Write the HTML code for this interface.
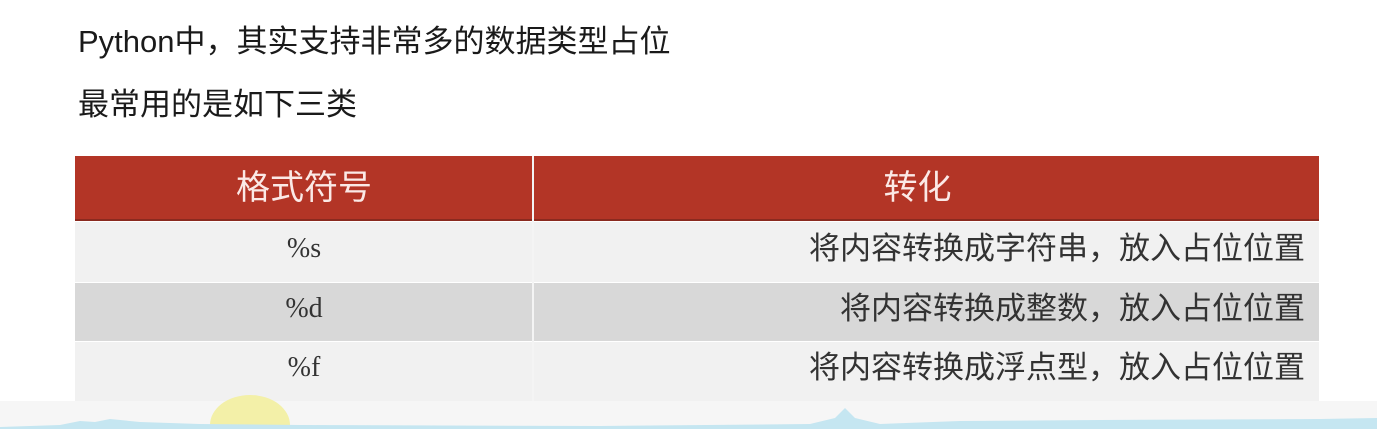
<!DOCTYPE html>
<html><head><meta charset="utf-8"><style>
html,body{margin:0;width:1377px;height:429px;overflow:hidden;}
body{background:#fff;position:relative;font-family:"Liberation Sans","Noto Sans CJK SC",sans-serif;}
.t{position:absolute;left:78px;font-size:31px;color:#1a1a1a;line-height:1;}
.c{position:absolute;font-family:"Liberation Sans","Noto Sans CJK SC",sans-serif;font-size:31px;color:#333;line-height:1;}
.m{font-family:"Liberation Serif",serif;font-size:28px;}
.r{position:absolute;left:75px;width:1244px;}
</style></head><body>
<div class="t" style="top:26px">Python中，其实支持非常多的数据类型占位</div>
<div class="t" style="top:89px">最常用的是如下三类</div>
<div class="r" style="top:156px;height:63px;background:#b33526;border-bottom:2px solid #8a2a1f"></div>
<div class="r" style="top:222px;height:60px;background:#f1f1f1"></div>
<div class="r" style="top:283px;height:58px;background:#d8d8d8"></div>
<div class="r" style="top:342px;height:59px;background:#f1f1f1"></div>
<div style="position:absolute;left:532px;top:156px;width:2px;height:245px;background:#f4f4f4"></div>
<div class="c" style="top:171px;left:75px;width:458px;text-align:center;color:#fbe9e6;font-size:34px">格式符号</div>
<div class="c" style="top:171px;left:534px;width:785px;text-align:center;color:#fbe9e6;font-size:34px"><span style="position:relative;left:-9px">转化</span></div>
<div class="c m" style="top:235px;left:75px;width:458px;text-align:center">%s</div>
<div class="c m" style="top:295px;left:75px;width:458px;text-align:center">%d</div>
<div class="c m" style="top:354px;left:75px;width:458px;text-align:center">%f</div>
<div class="c" style="top:233px;right:72px">将内容转换成字符串，放入占位位置</div>
<div class="c" style="top:293px;right:72px">将内容转换成整数，放入占位位置</div>
<div class="c" style="top:352px;right:72px">将内容转换成浮点型，放入占位位置</div>
<div style="position:absolute;left:0;top:401px;width:1377px;height:28px;background:#f6f6f6"></div>
<div style="position:absolute;left:210px;top:395px;width:80px;height:34px;border-radius:40px 40px 0 0/30px 30px 0 0;background:#f3f0a8"></div>
<svg style="position:absolute;left:0;top:400px" width="1377" height="29"><path d="M0 27 L60 25 L70 23 L80 21 L95 22 L110 19 L140 22 L200 24 L300 25 L600 26 L810 24 L835 18 L845 8 L855 18 L880 24 L960 21 L1100 20 L1320 19 L1377 18 L1377 29 L0 29Z" fill="#c5e6f1"/></svg>
</body></html>
